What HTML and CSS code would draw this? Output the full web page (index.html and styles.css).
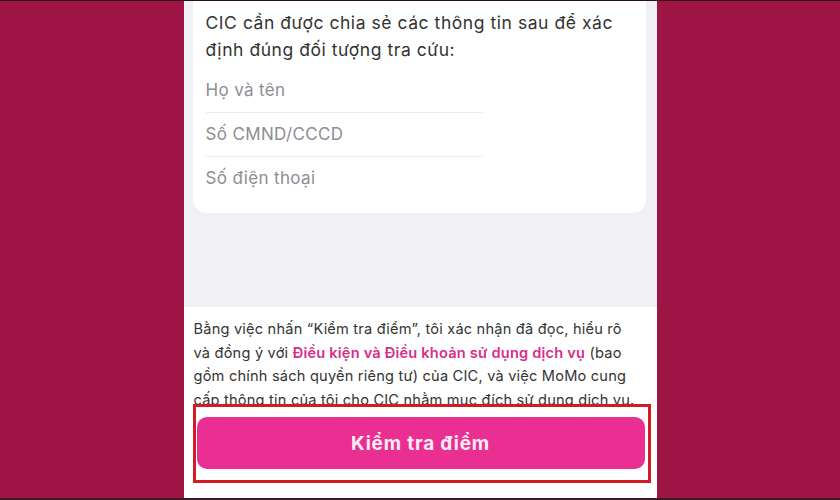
FILE: index.html
```html
<!DOCTYPE html>
<html lang="vi">
<head>
  <meta charset="UTF-8">
  <title>Kiểm tra điểm tín dụng CIC</title>
  <link rel="stylesheet" href="styles.css">
</head>
<body>
  <div class="screen">
    <div class="phone">
      <div class="info-card">
        <p class="info-lead">CIC cần được chia sẻ các thông tin sau để xác định đúng đối tượng tra cứu:</p>
        <div class="field">Họ và tên</div>
        <div class="field">Số CMND/CCCD</div>
        <div class="field last">Số điện thoại</div>
      </div>
      <div class="spacer"></div>
      <div class="footer">
        <div class="terms">
          <p>Bằng việc nhấn “Kiểm tra điểm”, tôi xác nhận đã đọc, hiểu rõ và đồng ý với <a class="terms-link" href="#">Điều kiện và Điều khoản sử dụng dịch vụ</a> (bao gồm chính sách quyền riêng tư) của CIC, và việc MoMo cung cấp thông tin của tôi cho CIC nhằm mục đích sử dụng dịch vụ.</p>
        </div>
        <div class="highlight">
          <button class="check-btn">Kiểm tra điểm</button>
        </div>
      </div>
    </div>
  </div>
</body>
</html>
```

FILE: styles.css
```css
body {
  margin: 0;
  background: #9e1444;
  font-family: 'Inter', 'Noto Sans', Arial, sans-serif;
}
.screen {
  height: 497px;
  border-top: 1px solid #2a1016;
  border-bottom: 2px solid #3a1a22;
  display: flex;
  justify-content: center;
  overflow: hidden;
}
.phone {
  width: 473px;
  height: 497px;
  background: #f1f1f5;
  display: flex;
  flex-direction: column;
}
.info-card {
  margin: 0 11px 0 9px;
  padding: 8px 13px 13px 13px;
  background: #fff;
  border-radius: 0 0 14px 14px;
}
.info-lead {
  margin: 0 0 6px 0;
  font-size: 17.5px;
  line-height: 27px;
  letter-spacing: 0.55px;
  color: #333;
}
.field {
  width: 277px;
  height: 43px;
  line-height: 43px;
  font-size: 17px;
  letter-spacing: 0.35px;
  color: #8d8d92;
  border-bottom: 1px solid #ececee;
}
.field.last { border-bottom: none; }
.spacer { flex: 1; }
.footer {
  background: #fff;
  padding: 11px 0 15px 0;
}
.terms {
  height: 86px;
  overflow: hidden;
  padding: 0 16px 0 10px;
}
.terms p {
  margin: 0;
  font-size: 14.6px;
  line-height: 23.5px;
  letter-spacing: 0.2px;
  color: #343434;
}
.terms-link {
  color: #d82d8b;
  font-weight: 600;
  text-decoration: none;
}
.highlight {
  margin: 0 6px 0 9px;
  padding: 10px 3px 11px 1px;
  border: 3px solid #d41a22;
}
.check-btn {
  display: block;
  width: 100%;
  height: 52px;
  border: none;
  border-radius: 10px;
  background: #eb2f92;
  color: #fdeef6;
  font-family: inherit;
  font-size: 19px;
  font-weight: 700;
  letter-spacing: 0.8px;
}
```
